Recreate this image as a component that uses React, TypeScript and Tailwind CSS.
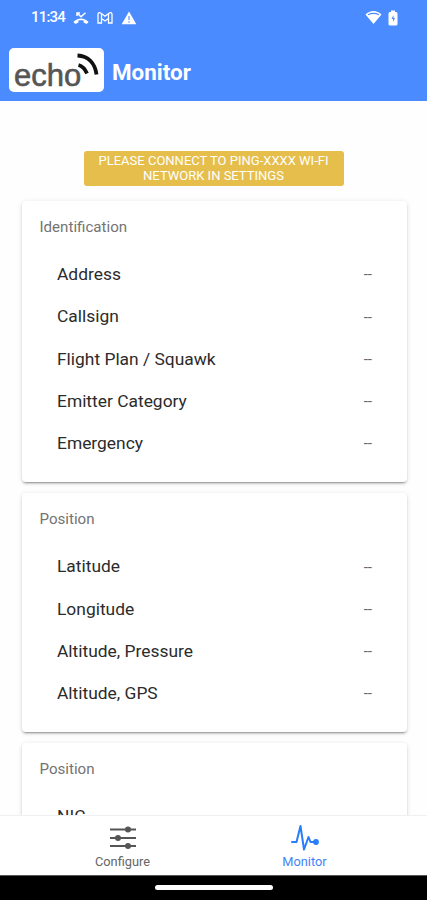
import React from 'react';

type Section = {
  title: string;
  rows: string[];
};

const sections: Section[] = [
  {
    title: 'Identification',
    rows: ['Address', 'Callsign', 'Flight Plan / Squawk', 'Emitter Category', 'Emergency'],
  },
  {
    title: 'Position',
    rows: ['Latitude', 'Longitude', 'Altitude, Pressure', 'Altitude, GPS'],
  },
  {
    title: 'Position',
    rows: ['NIC'],
  },
];

function StatusBar() {
  return (
    <div className="flex h-[35px] items-center pl-[31px] pr-[29px] text-white">
      <span className="w-[34px] whitespace-nowrap text-[15px] font-medium tracking-[-0.8px]">11:34</span>
      <svg className="ml-[8px]" width="16" height="14" viewBox="0 0 16 14" fill="none">
        <path d="M4 2 8 5.8 12.5 1.8M4 5V2h3" stroke="currentColor" strokeWidth="1.5" />
        <path d="M.4 11C4.5 6.3 11.5 6.3 15.6 11L13.6 13 10.6 11.4V9.6C9 9 7 9 5.4 9.6v1.8L2.4 13Z" fill="currentColor" />
      </svg>
      <svg className="ml-[8px]" width="16" height="14" viewBox="0 0 16 14" fill="none" stroke="currentColor" strokeWidth="1.3">
        <path d="M1 12V3Q2 .8 4 2.2L8 5.3 12 2.2Q14 .8 15 3V12H11.5V7.5L8 10 4.5 7.5V12ZM4.5 2.5V7.5M11.5 2.5V7.5" />
      </svg>
      <svg className="ml-[8px]" width="16" height="14" viewBox="0 0 16 14">
        <path d="M8 .5 15.3 13.3H.7Z" fill="currentColor" />
        <path d="M8 5v4M8 10.2v1.5" stroke="#4a8bff" strokeWidth="1.1" />
      </svg>
      <svg className="ml-auto" width="17" height="15" viewBox="0 0 17 15">
        <path d="M.5 4.4C4.8-.3 12.2-.3 16.5 4.4L8.5 14Z" fill="currentColor" />
        <path d="M3 4.8Q8.5 2 14 4.8" stroke="#4a8bff" strokeWidth="1.1" fill="none" />
      </svg>
      <svg className="ml-[6px]" width="10" height="16" viewBox="0 0 10 16">
        <path d="M3 .5H7V2H8Q9.5 2 9.5 3.5V14Q9.5 15.5 8 15.5H2Q.5 15.5 .5 14V3.5Q.5 2 2 2H3Z" fill="currentColor" />
        <path d="M5.5 5 3.5 9H5V12L7 8H5.5Z" fill="#4a8bff" />
      </svg>
    </div>
  );
}

function Logo() {
  return (
    <div className="relative h-[44px] w-[95px] rounded-[5px] bg-white">
      <span className="absolute left-[5px] top-[11px] font-['Liberation_Sans',Arial,sans-serif] text-[31px] leading-[34px] text-[#555] [-webkit-text-stroke:0.6px_#555]">
        echo
      </span>
      <svg className="absolute left-[66px] top-[4px]" width="26" height="26" viewBox="0 0 26 26" fill="none" stroke="#111">
        <path d="M2.5 3.5C13 4 20 11 21.5 22.5" strokeWidth="3.8" />
        <path d="M3.5 13Q9 14.5 12 21.5" strokeWidth="3.8" />
      </svg>
    </div>
  );
}

function Card({ title, rows }: Section) {
  return (
    <section className="shrink-0 rounded-[4px] bg-white pb-[18px] shadow-[0_3px_1px_-2px_rgba(0,0,0,0.2),0_2px_2px_0_rgba(0,0,0,0.14),0_1px_5px_0_rgba(0,0,0,0.12)]">
      <h2 className="h-[52px] pl-[17.5px] pt-[16px] text-[15.1px] leading-[20px] text-[#737373]">
        {title}
      </h2>
      {rows.map((row) => (
        <div key={row} className="flex h-[42.25px] items-center justify-between px-[35px]">
          <span className="text-[17.4px] text-[#2b2b2b]">{row}</span>
          <span className="pt-[1px] text-[15px] text-[#666]">--</span>
        </div>
      ))}
    </section>
  );
}

function TabBar() {
  return (
    <nav className="flex h-[60px] shrink-0 justify-center border-t border-[#f0f0f0] bg-white text-[12.8px] leading-[16px]">
      <button className="flex w-[182px] flex-col items-center pt-[8px] text-[#666]">
        <svg width="28" height="28" viewBox="0 0 28 28" fill="none" stroke="#555" strokeWidth="2">
          <path d="M1 5.5H27M1 14H27M1 22H27" />
          <g fill="#555" stroke="none">
            <circle cx="19" cy="5.5" r="3" />
            <circle cx="9" cy="14" r="3" />
            <circle cx="19" cy="22" r="3" />
          </g>
        </svg>
        <span className="mt-[2px]">Configure</span>
      </button>
      <button className="flex w-[182px] flex-col items-center pt-[8px] text-[#4384f8]">
        <svg width="30" height="28" viewBox="0 0 30 28" fill="none" stroke="#287dfb" strokeWidth="2" strokeLinejoin="round" strokeLinecap="round">
          <path d="M2 18H6.5L10.5 2 14 25.5 18.5 13 20.5 18H26" />
          <circle cx="26" cy="18" r="2.9" fill="#287dfb" stroke="none" />
        </svg>
        <span className="mt-[2px]">Monitor</span>
      </button>
    </nav>
  );
}

export default function App() {
  return (
    <div className="flex h-[900px] w-[427px] flex-col overflow-hidden bg-white font-[Roboto,sans-serif]">
      <header className="h-[100.5px] shrink-0 bg-[#4a8bff]">
        <StatusBar />
        <div className="flex items-center pl-[9px] pt-[13px]">
          <Logo />
          <h1 className="ml-[8px] pt-[5px] text-[22.4px] font-bold text-white">Monitor</h1>
        </div>
      </header>

      <main className="flex min-h-0 flex-1 flex-col overflow-hidden bg-[#fefefe] px-[22px] pt-[50.5px]">
        <div className="mx-auto flex h-[34.5px] w-[260px] shrink-0 items-center justify-center rounded-[3px] bg-[#e6be4b] text-center text-[13px] leading-[15.5px] text-white">
          <p>
            PLEASE CONNECT TO PING-XXXX WI-FI
            <br />
            NETWORK IN SETTINGS
          </p>
        </div>
        <div className="mt-[15.5px] flex w-[385px] flex-col gap-[11px]">
          {sections.map((section, i) => (
            <Card key={i} title={section.title} rows={section.rows} />
          ))}
        </div>
      </main>

      <TabBar />
      <div className="flex h-[25px] shrink-0 justify-center border-t border-[#555] bg-black pt-[9px]">
        <div className="h-[5px] w-[118px] rounded-full bg-white" />
      </div>
    </div>
  );
}
